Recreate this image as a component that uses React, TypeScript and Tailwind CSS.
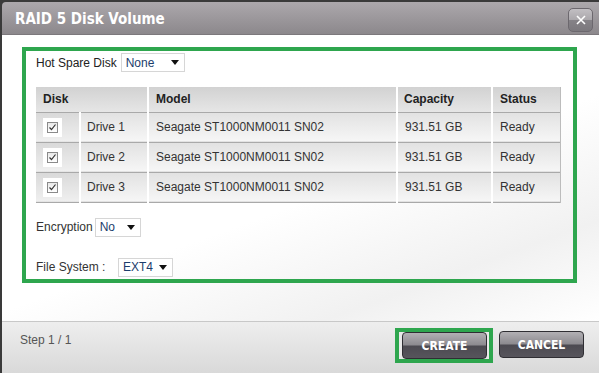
import React from 'react';

const drives = [
  { name: 'Drive 1', model: 'Seagate ST1000NM0011 SN02', capacity: '931.51 GB', status: 'Ready' },
  { name: 'Drive 2', model: 'Seagate ST1000NM0011 SN02', capacity: '931.51 GB', status: 'Ready' },
  { name: 'Drive 3', model: 'Seagate ST1000NM0011 SN02', capacity: '931.51 GB', status: 'Ready' },
];

const Select: React.FC<{ value: string; width: string }> = ({ value, width }) => (
  <div className={`${width} h-[19px] flex items-center justify-between bg-white border border-[#d6d6d6] pl-[4px] pr-[5px] text-[12px] text-[#1c3d6c]`}>
    <span>{value}</span>
    <svg viewBox="0 0 8 5" className="w-[8px] h-[5px]">
      <path d="M0 0h8L4 5z" fill="#111" />
    </svg>
  </div>
);

const Checkbox: React.FC = () => (
  <div className="w-[19px] h-[19px] bg-white flex items-center justify-center">
    <div className="w-[11px] h-[11px] border border-[#8a8a8a] bg-gradient-to-b from-[#e8e8e8] to-white flex items-center justify-center">
      <svg viewBox="0 0 9 9" className="w-[9px] h-[9px]">
        <path d="M1.5 4.5l2 2 4-5" fill="none" stroke="#333" strokeWidth="1.2" />
      </svg>
    </div>
  </div>
);

const DarkButton: React.FC<{ label: string }> = ({ label }) => (
  <button className="w-[85px] h-[27px] rounded-[4px] border border-[#2f2e33] bg-[linear-gradient(to_bottom,#b2b0b4_0%,#8c8a8f_48%,#4c4a51_52%,#57555c_100%)] text-white text-[12px] font-bold [font-family:'DejaVu_Sans_Condensed','DejaVu_Sans',sans-serif]">
    {label}
  </button>
);

export default function App() {
  return (
    <div className="w-[599px] h-[373px] bg-[#3a3a3a] pt-[2px] pl-[2px] overflow-hidden [font-family:'Liberation_Sans',Arial,sans-serif]">
      <div className="h-full flex flex-col rounded-tl-[4px] overflow-hidden">
        {/* title bar */}
        <div className="h-[33px] shrink-0 flex items-center justify-between pl-[13px] pr-[6px] bg-gradient-to-b from-[#aca8ac] to-[#8c888c] border-b border-[#7c787c]">
          <span className="pt-[3px] text-white font-bold text-[15px] [font-family:'DejaVu_Sans_Condensed','DejaVu_Sans',sans-serif]">
            RAID 5 Disk Volume
          </span>
          <div className="w-[25px] h-[24px] mt-[3px] rounded-[5px] border border-[#6c686e] bg-[linear-gradient(to_bottom,#c2bfc3_0%,#aaa7ab_50%,#858287_52%,#7b787d_100%)] flex items-center justify-center">
            <svg viewBox="0 0 10 10" className="w-[10px] h-[10px]">
              <path d="M1 1l8 8M9 1l-8 8" stroke="white" strokeWidth="1.6" />
            </svg>
          </div>
        </div>

        {/* body */}
        <div className="flex-1 bg-[linear-gradient(160deg,#ffffff_0%,#ffffff_55%,#f1f1f1_80%,#ffffff_100%)] pt-[12px] pl-[20px]">
          <div className="w-[555px] h-[236px] border-[4px] border-[#2ea64e] pl-[10px] pr-[13px] pt-[2px] text-[12px] text-[#222]">
            <div className="flex items-center gap-[4px]">
              <span>Hot Spare Disk</span>
              <Select value="None" width="w-[64px]" />
            </div>

            <table className="mt-[15px] w-[524px] border-collapse table-fixed">
              <colgroup>
                <col className="w-[44px]" />
                <col className="w-[68px]" />
                <col className="w-[249px]" />
                <col className="w-[95px]" />
                <col className="w-[68px]" />
              </colgroup>
              <thead>
                <tr className="h-[25px] bg-gradient-to-b from-[#d2d2d2] to-[#e6e6e6] text-left font-bold">
                  <th colSpan={2} className="pl-[7px] border-r-2 border-white">Disk</th>
                  <th className="pl-[7px] border-r-2 border-white">Model</th>
                  <th className="pl-[6px] border-r-2 border-white">Capacity</th>
                  <th className="pl-[7px] border-r border-[#bcbcbc]">Status</th>
                </tr>
              </thead>
              <tbody className="text-[#333]">
                {drives.map((d) => (
                  <tr key={d.name} className="h-[30px] border-t border-[#a9a9a9] border-b bg-gradient-to-b from-[#e2e2e2] to-[#f6f6f6]">
                    <td className="pl-[7px] border-r-2 border-white bg-gradient-to-b from-[#d9d9d9] to-[#efefef]">
                      <Checkbox />
                    </td>
                    <td className="pl-[6px] border-r-2 border-white">{d.name}</td>
                    <td className="pl-[7px] border-r-2 border-white">{d.model}</td>
                    <td className="pl-[7px] border-r-2 border-white">{d.capacity}</td>
                    <td className="pl-[7px] border-r border-[#bcbcbc]">{d.status}</td>
                  </tr>
                ))}
              </tbody>
            </table>

            <div className="mt-[15px] flex items-center gap-[2px] text-[#333]">
              <span>Encryption</span>
              <Select value="No" width="w-[46px]" />
            </div>

            <div className="mt-[21px] flex items-center text-[#333]">
              <span className="w-[82px]">File System :</span>
              <Select value="EXT4" width="w-[55px]" />
            </div>
          </div>
        </div>

        {/* footer */}
        <div className="h-[52px] shrink-0 border-t border-[#c8c8c8] bg-gradient-to-b from-[#eeeeee] to-[#d9d9d9] flex items-start justify-between pl-[18px] pr-[15px] pt-[6px]">
          <span className="pt-[3px] text-[12px] text-[#555]">Step 1 / 1</span>
          <div className="flex items-start gap-[6px]">
            <div className="border-[4px] border-[#2ea64e] pl-[3px] pr-[2px] bg-[#e9e9e9]">
              <DarkButton label="CREATE" />
            </div>
            <div className="pt-[3px]">
              <DarkButton label="CANCEL" />
            </div>
          </div>
        </div>
      </div>
    </div>
  );
}
